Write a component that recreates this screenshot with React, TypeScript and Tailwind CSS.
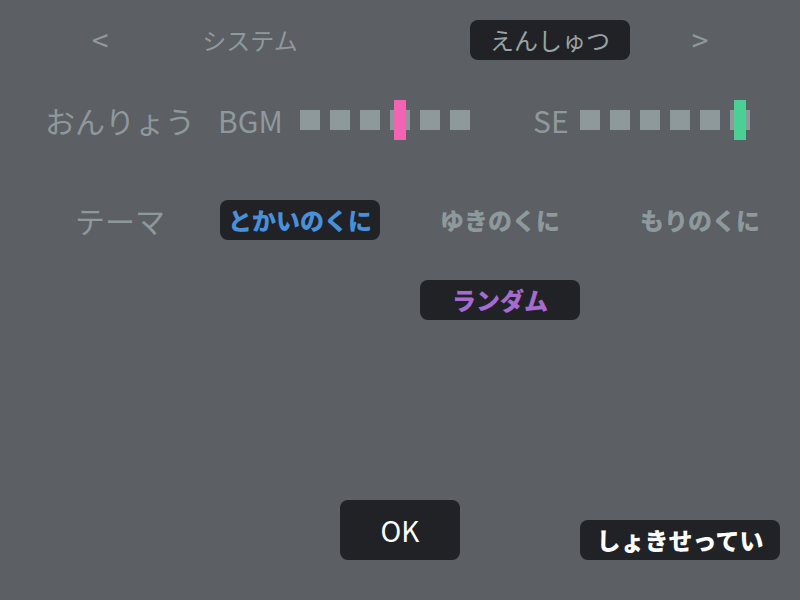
import React from "react";

const font = { fontFamily: '"Noto Sans CJK JP", "Noto Sans", sans-serif' };

function Squares({ marker, color }: { marker: number; color: string }) {
  return (
    <div className="flex gap-[10px] items-center">
      {[0, 1, 2, 3, 4, 5].map((i) => (
        <div key={i} className="relative w-[20px] h-[20px] bg-[#8e999c]">
          {i === marker && (
            <div className={`absolute left-[4px] top-[-10px] w-[12px] h-[40px] ${color}`} />
          )}
        </div>
      ))}
    </div>
  );
}

export default function App() {
  return (
    <div
      className="w-[800px] h-[600px] bg-[#5c5f64] flex flex-col text-[#8e999c] overflow-hidden"
      style={font}
    >
      {/* Row 1: tabs */}
      <div className="mt-[20px] h-[40px] flex items-center pl-[25px]">
        <div className="w-[150px] flex justify-center text-[30px] leading-none pb-[2px]">&lt;</div>
        <div className="w-[150px] flex justify-center text-[24px] leading-none">システム</div>
        <div className="w-[150px]" />
        <div className="w-[150px] flex justify-center">
          <div className="shrink-0 w-[160px] h-[40px] rounded-lg bg-[#202226] flex items-center justify-center text-[24px] text-[#98a3a5]">
            えんしゅつ
          </div>
        </div>
        <div className="w-[150px] flex justify-center text-[30px] leading-none pb-[2px]">&gt;</div>
      </div>

      {/* Row 2: volume */}
      <div className="mt-[40px] h-[40px] flex items-center pl-[40px]">
        <div className="w-[160px] flex justify-center text-[30px] leading-none whitespace-nowrap">おんりょう</div>
        <div className="ml-[18px] w-[82px] text-[30px] leading-none">BGM</div>
        <Squares marker={3} color="bg-[#f462b4]" />
        <div className="ml-[63px] w-[47px] text-[30px] leading-none">SE</div>
        <Squares marker={5} color="bg-[#4ccf94]" />
      </div>

      {/* Row 3: theme */}
      <div className="mt-[60px] h-[40px] flex items-center pl-[40px]">
        <div className="w-[160px] flex justify-center text-[30px] leading-none">テーマ</div>
        <div className="w-[200px] flex justify-center">
          <div className="w-[160px] h-[40px] rounded-lg bg-[#202226] flex items-center justify-center text-[24px] font-black text-[#4a90d9]">
            とかいのくに
          </div>
        </div>
        <div className="w-[200px] flex justify-center text-[24px] font-black">ゆきのくに</div>
        <div className="w-[200px] flex justify-center text-[24px] font-black">もりのくに</div>
      </div>

      {/* Row 4: random */}
      <div className="mt-[40px] h-[40px] flex items-center pl-[420px]">
        <div className="w-[160px] h-[40px] rounded-lg bg-[#202226] flex items-center justify-center text-[24px] font-black text-[#a66bcf]">
          ランダム
        </div>
      </div>

      {/* Bottom buttons */}
      <div className="mt-[180px] h-[60px] flex items-end pl-[340px]">
        <div className="w-[120px] h-[60px] rounded-lg bg-[#202226] flex items-center justify-center text-[28px] text-white">
          OK
        </div>
        <div className="ml-[120px] w-[200px] h-[40px] rounded-lg bg-[#202226] flex items-center justify-center text-[24px] font-black text-white">
          しょきせってい
        </div>
      </div>
    </div>
  );
}
